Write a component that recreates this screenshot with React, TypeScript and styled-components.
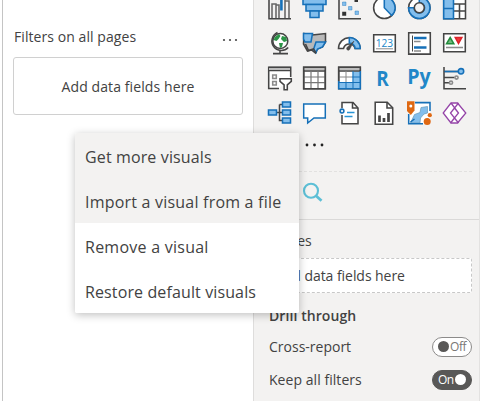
import React from "react";
import styled, { createGlobalStyle } from "styled-components";

const GlobalStyle = createGlobalStyle`
  * { box-sizing: border-box; }
  body { margin: 0; overflow: hidden; background: #fff; }
`;

const Screen = styled.div`
  position: relative;
  display: flex;
  width: 480px;
  height: 401px;
  overflow: hidden;
  background: #fff;
  color: #424242;
  font-family: "Open Sans", "Noto Sans", sans-serif;
`;

const Text = styled.span<{ $size?: number; $spacing?: number; $bold?: boolean }>`
  font-size: ${(p) => p.$size ?? 14}px;
  letter-spacing: ${(p) => p.$spacing ?? 0}px;
  font-weight: ${(p) => (p.$bold ? 600 : 400)};
  line-height: 20px;
  white-space: nowrap;
`;

const FiltersPane = styled.section`
  width: 251px;
  margin-left: 2px;
  padding: 27px 10px 0 10px;
  border-left: 1px solid #c4c4c4;
  flex: none;
`;

const FiltersHeader = styled.header`
  display: flex;
  justify-content: space-between;
  align-items: center;
  height: 20px;
  padding: 0 4px 0 1px;
`;

const DropBox = styled.div`
  display: flex;
  align-items: center;
  justify-content: center;
  width: 230px;
  height: 58px;
  margin-top: 10px;
  padding-top: 2px;
  border: 1px solid #d0d0d0;
  border-radius: 3px;
`;

const VisualsPane = styled.section`
  width: 227px;
  flex: none;
  display: flex;
  flex-direction: column;
  background: #f3f2f1;
  border-left: 1px solid #dedddc;
  border-right: 1px solid #e3e2e1;
  overflow: hidden;
`;

const IconGrid = styled.div`
  display: grid;
  grid-template-columns: repeat(6, 24px);
  grid-auto-rows: 24px;
  gap: 11px;
  margin: -4px 0 0 13px;
`;

const Icon = styled.svg`
  display: block;
  width: 24px;
  height: 24px;
  overflow: visible;
  fill: none;
  stroke: #454545;
  stroke-width: 1.55;
`;

const MoreRow = styled.div`
  display: flex;
  align-items: center;
  height: 47px;
  margin-right: 7px;
  padding: 0 0 6px 51px;
  border-bottom: 1px dashed #e2e1e0;
`;

const Dots = styled.svg<{ $wide?: boolean }>`
  display: block;
  width: ${(p) => (p.$wide ? 20 : 17)}px;
  height: 4px;
  margin-top: ${(p) => (p.$wide ? 0 : 5)}px;
`;

const SearchRow = styled.div`
  height: 48px;
  padding: 10px 0 0 48px;
  border-bottom: 1px solid #dad9d8;
`;

const SearchIcon = styled.svg`
  display: block;
  width: 22px;
  height: 22px;
`;

const Fields = styled.div`
  padding: 11px 7px 0 15px;
  display: flex;
  flex-direction: column;
`;

const FieldBox = styled.div`
  height: 35px;
  margin: 7px 0 13px;
  padding-left: 5px;
  display: flex;
  align-items: center;
  background: #fff;
  border: 1px dashed #c8c8c8;
  border-radius: 2px;
`;

const SettingRow = styled.div`
  display: flex;
  align-items: center;
  justify-content: space-between;
  height: 33px;
`;

const Settings = styled.div`
  padding-top: 4px;
`;

const Toggle = styled.div<{ $on?: boolean }>`
  display: flex;
  flex-direction: ${(p) => (p.$on ? "row-reverse" : "row")};
  align-items: center;
  justify-content: space-between;
  width: 40px;
  height: 20px;
  padding: 0 5px;
  border: 1px solid ${(p) => (p.$on ? "#595857" : "#8c8b8a")};
  border-radius: 10px;
  background: ${(p) => (p.$on ? "#595857" : "#fff")};
  color: ${(p) => (p.$on ? "#fff" : "#797775")};
`;

const Knob = styled.span<{ $on?: boolean }>`
  width: 11px;
  height: 11px;
  border-radius: 50%;
  background: ${(p) => (p.$on ? "#fff" : "#595857")};
`;

const Menu = styled.nav`
  position: absolute;
  left: 75px;
  top: 133px;
  width: 224px;
  background: #fff;
  border-radius: 2px;
  overflow: hidden;
  box-shadow: 0 2px 8px rgba(0, 0, 0, 0.25);
`;

const MenuItem = styled.div<{ $shaded?: boolean }>`
  display: flex;
  align-items: center;
  height: 45px;
  padding: 3px 0 0 10px;
  background: ${(p) => (p.$shaded ? "#f3f2f1" : "#fff")};
`;

const SvgLabel = styled.text<{ $size: number; $bold?: boolean }>`
  font-family: "Open Sans", sans-serif;
  font-size: ${(p) => p.$size}px;
  font-weight: ${(p) => (p.$bold ? 700 : 500)};
  fill: #2187c8;
  stroke: none;
`;

const blue = "#1670b8";
const light = "#83beec";
const gray = "#8b8b8b";

const icons: React.ReactNode[] = [
  <>
    <path d="M2 0V22.7H24" />
    <path d="M5 22V8h4v14M9 9h3v13M18 22V0M22 22V5h-4" stroke="#666" />
    <path d="M14.4 0v14.5" stroke={blue} strokeWidth="2.6" />
  </>,
  <g fill={light} stroke={blue}>
    <path d="M1 1h23v7.5H1z" />
    <path d="M4 8.5h17V15H4z" />
    <path d="M8 15h9v6.500H8z" />
  </g>,
  <>
    <path d="M2 0v22.800h22" />
    <path d="M5.500 6h3.500v3.500H5.500zM11.500 10.500H15V14h-3.500zM18 15h3.500v3.500H18z" fill={light} stroke={blue} strokeWidth=".4" />
    <path d="M17.500 2.500h3.500v3.500h-3.500zM5.200 15.800h4v4h-4z" fill="#333" stroke="none" />
  </>,
  <>
    <circle cx="12.300" cy="11.800" r="10.700" fill="#fff" />
    <path d="M12.300 1.100a10.700 10.700 0 0 1 7.400 18.400l-7.400-7.700z" fill={light} stroke={blue} />
  </>,
  <>
    <circle cx="12.300" cy="11.800" r="10.700" fill="#fff" />
    <path d="M12.300 1.100A10.700 10.700 0 1 1 1.600 11.800H7a5.300 5.300 0 1 0 5.300-5.300z" fill={light} stroke={blue} />
    <circle cx="12.300" cy="11.800" r="5" fill="#f3f2f1" />
  </>,
  <>
    <path d="M1.700 1h21.800v21.700H1.700zM12 8h11.500M17.500 8v14.500M17.500 15h6M12 15h5.500" fill="#fff" />
    <path d="M1.700 1H11.500v21.700H1.700zM1.700 12.500h9.800" fill={light} stroke={blue} />
  </>,

  <>
    <circle cx="13.300" cy="10" r="7.500" fill="#fff" />
    <path d="M8 6l4-3 1.500 2-2 3-2 2-3-1zM15 5l4 1 1 4-3 1-3-3zM12 12l4 0-1 4-2 1z" fill="#2a9446" stroke="none" />
    <path d="M10.500 1.500A9.400 9.400 0 1 0 21.200 16.500M13 19.500v3M6 22.600h15" />
  </>,
  <>
    <path d="M2 2.500L10 4l5-.5 8.500-1V11l-3 5-5 2-2 4-4-3-4 1-4-7z" fill="#b9b9b9" />
    <path d="M1.500 2.500h9L9 11H3l-1.500-3zM14 11h9.500l-3 5-5 2-1.500 3.500-2.500-3z" fill={light} stroke={blue} />
    <path d="M3.500 13l3 6.500 5-1.500 2.500 4" />
  </>,
  <>
    <path d="M1.500 17.500a10.800 10.800 0 0 1 21.600 0h-5a6 6 0 0 0-11.600 0z" fill="#fff" />
    <path d="M12.300 6.500a11 11 0 0 1 10.900 11h-5a6 6 0 0 0-5.900-5.600z" fill={light} stroke={blue} />
    <path d="M10.500 16l6.500-6-4 7.700a1.700 1.700 0 1 1-2.500-1.700z" fill="#494949" strokeWidth=".5" />
  </>,
  <>
    <path d="M1.700 3.700h21.600v17H1.700z" fill="#fff" />
    <SvgLabel $size={11.5} x="3.700" y="15.700" textLength="17.500" lengthAdjust="spacingAndGlyphs">123</SvgLabel>
    <path d="M4 17.800h17" stroke={gray} strokeWidth="1" />
  </>,
  <>
    <path d="M1.700 1.700h21.600v21.400H1.700z" fill="#fff" />
    <path d="M5.500 4.500v16" strokeWidth="1" />
    <path d="M7 7h12.500M7 16.500h12.500" stroke={blue} strokeWidth="2.500" />
    <path d="M7 10.400h6.500M7 20h7" stroke={gray} />
  </>,
  <>
    <path d="M1.700 2.800h21.600v18H1.700z" fill="#fff" />
    <path d="M4.600 12.700l3.600-6.200 3.600 6.200z" fill="#72b77d" stroke="#238b3c" />
    <path d="M13.300 6.500h6.500l-3.300 5.800z" fill="#ef3b3b" stroke="#dc2229" />
    <path d="M4 16.500h17" stroke={gray} />
  </>,

  <>
    <path d="M12 22.500H1.700V1.300h22V11" fill="#fff" />
    <path d="M2 2.800h21" stroke="#bcbcbc" strokeWidth="2.500" />
    <path d="M1.700 4.700h22M1.700 1.300h22" strokeWidth="1.300" />
    <path d="M5.700 9h3.600v3.500H5.700zM5.700 15.500h3.600V19H5.700z" stroke={gray} />
    <path d="M13 12.800h11.300v2.500l-4 3.500v5h-3.200v-5l-4.100-3.500z" fill="#fff" />
  </>,
  <>
    <path d="M1.700 1.300h21.600v21.500H1.700z" fill="#fff" />
    <path d="M2 2.800h21" stroke="#bcbcbc" strokeWidth="2.500" />
    <path d="M1.700 5h21.600" />
    <path d="M9 5v17M16 5v17M2 11h21M2 16.600h21" stroke="#777" strokeWidth="1.200" />
    <path d="M1.700 1.300h21.600v21.500H1.700z" />
  </>,
  <>
    <path d="M1.700 1.300h21.600v21.500H1.700z" fill="#fff" />
    <path d="M15.500 5.500h7.500v17H2V16h13.500z" fill={light} stroke="none" />
    <path d="M2 2.800h21" stroke="#bcbcbc" strokeWidth="2.500" />
    <path d="M1.700 5h21.600" />
    <path d="M9 5v11M2 11h13" stroke="#888" strokeWidth="1" />
    <path d="M16 5v17M9 16v6M15 11h8M2 16.500h21" stroke={blue} strokeWidth="1" />
    <path d="M1.700 15V1.300h21.600V5" />
    <path d="M1.700 15v7.800h21.600V5" stroke={blue} />
  </>,
  <SvgLabel $size={20.5} $bold x="4.300" y="19.600" textLength="12.500" lengthAdjust="spacingAndGlyphs">R</SvgLabel>,
  <SvgLabel $size={21} $bold x=".2" y="17.500" textLength="23.500" lengthAdjust="spacingAndGlyphs">Py</SvgLabel>,
  <>
    <path d="M2 1v21.800h22M2 5.500h15M2 11.500h10.500M2 16.800h5.500" />
    <path d="M2.500 5.500h14" stroke={blue} />
    <circle cx="19" cy="5.300" r="2.700" fill={light} stroke={blue} />
    <circle cx="14.500" cy="11.500" r="1.600" stroke={gray} />
    <circle cx="9" cy="16.700" r="1.600" stroke={gray} />
  </>,

  <>
    <path d="M9 11.500h6M12.500 3.500v16h3M12.500 3.500h3" />
    <g fill={light} stroke={blue}>
      <path d="M1.500 9h8v5h-8zM15.500 1h8v5h-8zM15.500 9h8v5h-8zM15.500 17h8v5h-8z" />
    </g>
  </>,
  <path d="M1.700 3h21.600v14H12l-6.300 5v-5h-4z" fill="#fff" stroke={blue} strokeWidth="1.500" />,
  <>
    <path d="M5 7V1.500h11l5 5.500v15.700H5V14" fill="#fff" />
    <path d="M15.500 1.500V7H21" />
    <circle cx="5" cy="10" r="1.900" stroke={blue} />
    <path d="M10 11.500h7.500M7.500 15.400h8" stroke="#2794d5" />
  </>,
  <>
    <path d="M3.200 1.200h12l5.500 5.500v16.600H3.200z" fill="#fff" />
    <path d="M15 1.500V7h5.500" />
    <path d="M7.500 21v-6.500M12 21v-4M16.500 21v-9" strokeWidth="2.700" />
  </>,
  <>
    <path d="M8 1.600h15V20l-3 2.700H1.700V13z" fill="#fff" stroke="none" />
    <path d="M20.500 5.500l-6.500 1-1 5-5.500 2-4 8.500h9.500l.5-5 3.500-4 3.500-1z" fill={light} stroke="#6799b8" strokeWidth=".7" />
    <path d="M8 1.600h15V10M1.700 13v9.700H16M3.500 21l4-3" stroke={blue} />
    <path d="M0 .2h7.500V9.500L3.800 14 0 10z" fill="#df6812" stroke="none" />
    <circle cx="3.800" cy="5" r="1.500" fill="#fff" stroke="none" />
    <circle cx="20.200" cy="20.500" r="3.500" fill="#df6812" stroke="none" />
    <circle cx="22.800" cy="14.200" r="2.100" fill="#df6812" stroke="none" />
  </>,
  <g stroke="#9545a8" strokeWidth="1.300">
    <path d="M9 2h6.500l8.300 10-8.300 10H9L1.200 12z" fill="#fff" />
    <path d="M9 2l7.500 10-4 5-4-5 8-10M12.500 7l4 5M12.500 17l-4 5M12.500 17l4 5" />
  </g>,
];

const menuItems = [
  { label: "Get more visuals", shaded: true, spacing: 0.13 },
  { label: "Import a visual from a file", shaded: true, spacing: 0.21 },
  { label: "Remove a visual", spacing: 0.25 },
  { label: "Restore default visuals", spacing: 0.12 },
];

const MoreDots = ({ wide }: { wide?: boolean }) => (
  <Dots $wide={wide} viewBox={wide ? "0 0 20 4" : "0 0 17 4"} fill={wide ? "#222" : "#484848"}>
    <circle cx="2" cy="2" r={wide ? 1.4 : 1.1} />
    <circle cx={wide ? 9.5 : 8} cy="2" r={wide ? 1.4 : 1.1} />
    <circle cx={wide ? 17 : 14} cy="2" r={wide ? 1.4 : 1.1} />
  </Dots>
);

export default function App() {
  return (
    <>
      <GlobalStyle />
      <Screen>
        <FiltersPane>
          <FiltersHeader>
            <Text $size={14} $spacing={0.07}>Filters on all pages</Text>
            <MoreDots />
          </FiltersHeader>
          <DropBox>
            <Text $size={14} $spacing={0.1}>Add data fields here</Text>
          </DropBox>
        </FiltersPane>
        <VisualsPane>
          <IconGrid>
            {icons.map((drawing, i) => (
              <Icon key={i} viewBox="0 0 24 24">{drawing}</Icon>
            ))}
          </IconGrid>
          <MoreRow>
            <MoreDots wide />
          </MoreRow>
          <SearchRow>
            <SearchIcon viewBox="0 0 22 22" fill="none" stroke="#5cbfd6">
              <circle cx="9" cy="8.800" r="7" strokeWidth="2.100" />
              <path d="M14 13.800l5.500 5" strokeWidth="2.800" />
            </SearchIcon>
          </SearchRow>
          <Fields>
            <Text>Values</Text>
            <FieldBox>
              <Text $spacing={-0.05}>Add data fields here</Text>
            </FieldBox>
            <Text $bold $spacing={0.08}>Drill through</Text>
            <Settings>
              <SettingRow>
                <Text>Cross-report</Text>
                <Toggle>
                  <Knob />
                  <Text $size={12} $spacing={-0.5}>Off</Text>
                </Toggle>
              </SettingRow>
              <SettingRow>
                <Text $spacing={0.05}>Keep all filters</Text>
                <Toggle $on>
                  <Knob $on />
                  <Text $size={12} $spacing={-0.5}>On</Text>
                </Toggle>
              </SettingRow>
            </Settings>
          </Fields>
        </VisualsPane>
        <Menu>
          {menuItems.map((item) => (
            <MenuItem key={item.label} $shaded={item.shaded}>
              <Text $size={16} $spacing={item.spacing}>{item.label}</Text>
            </MenuItem>
          ))}
        </Menu>
      </Screen>
    </>
  );
}
